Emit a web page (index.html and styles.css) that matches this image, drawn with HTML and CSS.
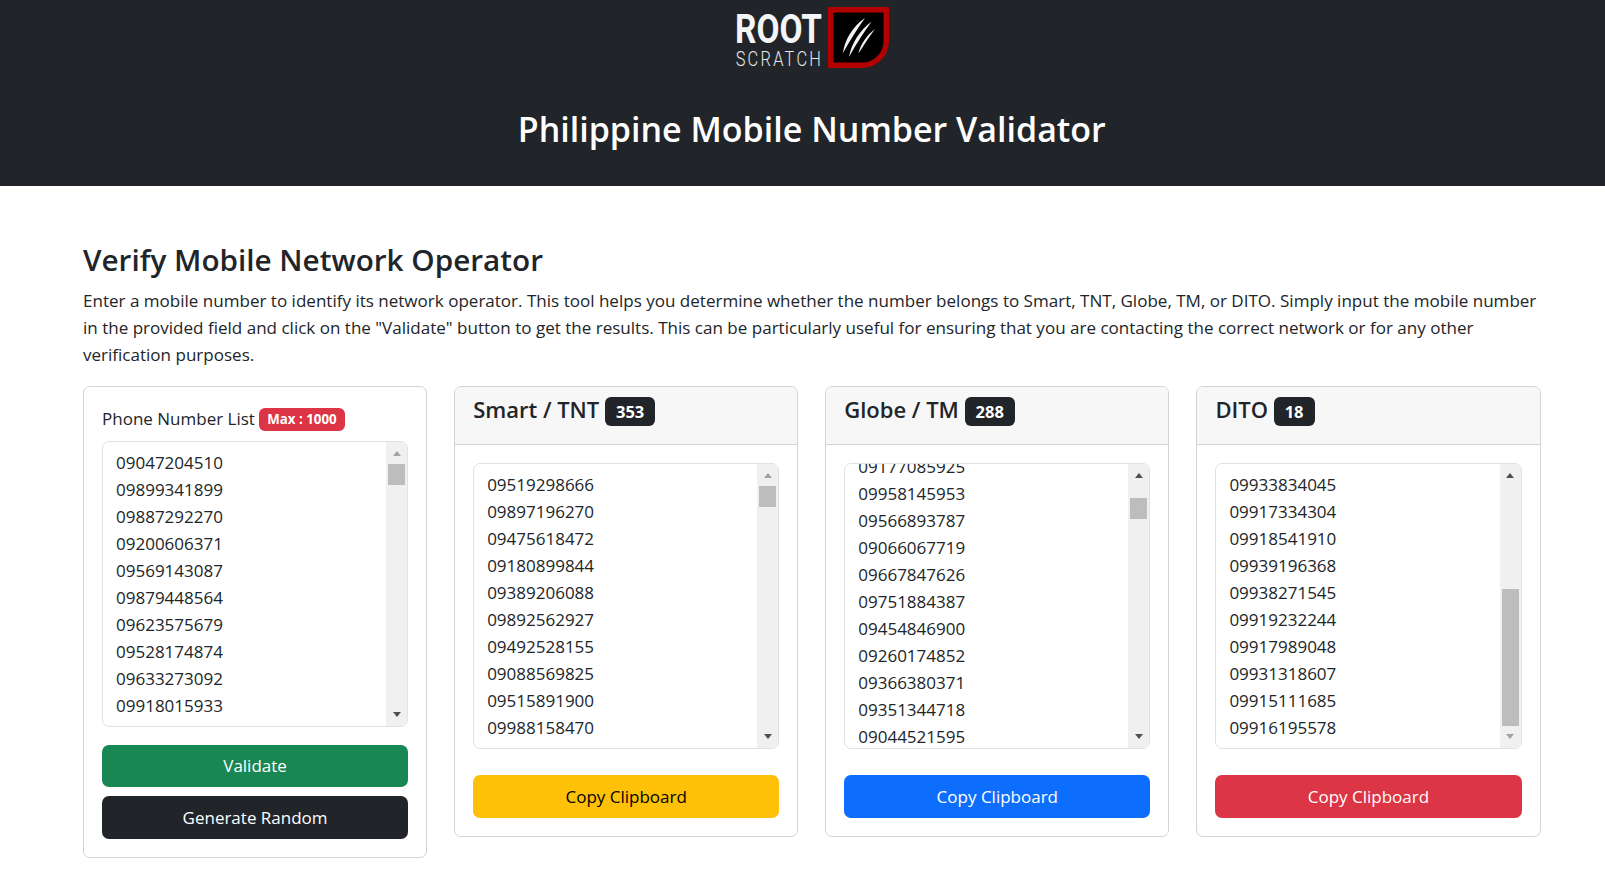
FILE: index.html
```html
<!DOCTYPE html>
<html lang="en">
<head>
<meta charset="utf-8">
<title>Philippine Mobile Number Validator</title>
<link rel="stylesheet" href="styles.css">
</head>
<body>
<header class="site-header">
  <svg class="logo" viewBox="0 0 155 70" width="155" height="70" role="img" aria-label="Root Scratch">
    <text class="logo-root" x="1" y="43" textLength="87" lengthAdjust="spacingAndGlyphs">ROOT</text>
    <g transform="scale(.82 1)">
      <text class="logo-scratch" x="2" y="66" textLength="104" lengthAdjust="spacing">SCRATCH</text>
    </g>
    <g transform="translate(94 7)">
      <path d="M2.7 2.7H58.3V34A24.3 24.3 0 0 1 34 58.3H2.7Z" fill="#000" stroke="#b30000" stroke-width="5.4"/>
      <path d="M15 46C16.5 33 25 19 37 11C30 21 22 33 15 46Z" fill="#f2f2f2"/>
      <path d="M21 50C23.5 36 32 23 43.5 14.7C36 25 28 37 21 50Z" fill="#f2f2f2"/>
      <path d="M30.5 46.5C32.5 37 39 28 47 22C41 30 36 38 30.5 46.5Z" fill="#f2f2f2"/>
    </g>
  </svg>
  <h1 class="site-title">Philippine Mobile Number Validator</h1>
</header>

<main class="content">
  <h2 class="section-title">Verify Mobile Network Operator</h2>
  <p class="intro">Enter a mobile number to identify its network operator. This tool helps you determine whether the number belongs to Smart, TNT, Globe, TM, or DITO. Simply input the mobile number in the provided field and click on the "Validate" button to get the results. This can be particularly useful for ensuring that you are contacting the correct network or for any other verification purposes.</p>

  <div class="cards">
    <section class="card">
      <div class="card-body">
        <div class="field-label">Phone Number List <span class="badge badge-red">Max : 1000</span></div>
        <div class="listbox">
          <div class="list-lines">
            <div>09047204510</div><div>09899341899</div><div>09887292270</div><div>09200606371</div><div>09569143087</div><div>09879448564</div><div>09623575679</div><div>09528174874</div><div>09633273092</div><div>09918015933</div>
          </div>
          <div class="scrollbar">
            <span class="arrow-up arrow-off"></span>
            <span class="thumb thumb-top"></span>
            <span class="arrow-down"></span>
          </div>
        </div>
        <button class="btn btn-green btn-first">Validate</button>
        <button class="btn btn-dark btn-next">Generate Random</button>
      </div>
    </section>

    <section class="card">
      <div class="card-header">Smart / TNT <span class="badge badge-dark">353</span></div>
      <div class="card-body">
        <div class="listbox">
          <div class="list-lines">
            <div>09519298666</div><div>09897196270</div><div>09475618472</div><div>09180899844</div><div>09389206088</div><div>09892562927</div><div>09492528155</div><div>09088569825</div><div>09515891900</div><div>09988158470</div>
          </div>
          <div class="scrollbar">
            <span class="arrow-up arrow-off"></span>
            <span class="thumb thumb-top"></span>
            <span class="arrow-down"></span>
          </div>
        </div>
        <button class="btn btn-yellow btn-copy">Copy Clipboard</button>
      </div>
    </section>

    <section class="card">
      <div class="card-header">Globe / TM <span class="badge badge-dark">288</span></div>
      <div class="card-body">
        <div class="listbox">
          <div class="list-lines list-scrolled">
            <div>09177085925</div><div>09958145953</div><div>09566893787</div><div>09066067719</div><div>09667847626</div><div>09751884387</div><div>09454846900</div><div>09260174852</div><div>09366380371</div><div>09351344718</div><div>09044521595</div>
          </div>
          <div class="scrollbar">
            <span class="arrow-up"></span>
            <span class="thumb thumb-globe"></span>
            <span class="arrow-down"></span>
          </div>
        </div>
        <button class="btn btn-blue btn-copy">Copy Clipboard</button>
      </div>
    </section>

    <section class="card">
      <div class="card-header">DITO <span class="badge badge-dark">18</span></div>
      <div class="card-body">
        <div class="listbox">
          <div class="list-lines">
            <div>09933834045</div><div>09917334304</div><div>09918541910</div><div>09939196368</div><div>09938271545</div><div>09919232244</div><div>09917989048</div><div>09931318607</div><div>09915111685</div><div>09916195578</div>
          </div>
          <div class="scrollbar">
            <span class="arrow-up"></span>
            <span class="thumb thumb-dito"></span>
            <span class="arrow-down arrow-off"></span>
          </div>
        </div>
        <button class="btn btn-red btn-copy">Copy Clipboard</button>
      </div>
    </section>
  </div>
</main>
</body>
</html>
```
FILE: styles.css
```css
* { box-sizing: border-box; }
html, body { margin: 0; height: 100%; overflow: hidden; }
body {
  font-family: "Open Sans", "Noto Sans", sans-serif;
  font-size: 17px;
  line-height: 27px;
  color: #212529;
  background: #fff;
}
.site-header {
  height: 186px;
  background: #212529;
  color: #fff;
  padding: 0 64.5px 0 83px;
  display: flex;
  flex-direction: column;
  align-items: center;
}
.logo { display: block; flex: none; }
.logo-root { font-family: Roboto, sans-serif; font-weight: 700; font-size: 41px; fill: #f4f5f7; }
.logo-scratch { font-family: Roboto, sans-serif; font-weight: 300; font-size: 20px; fill: #e8e9eb; }
.site-title {
  margin: 39px 0 0;
  font-size: 34px;
  line-height: 41px;
  font-weight: 600;
}
.content { padding: 55px 64.5px 0 83px; }
.section-title {
  margin: 0 0 8px;
  font-size: 29.7px;
  line-height: 38px;
  font-weight: 600;
}
.intro { margin: 0 0 18px; font-size: 17.05px; }
.cards {
  display: grid;
  grid-template-columns: repeat(4, 1fr);
  gap: 27px;
  align-items: start;
}
.card {
  border: 1px solid #d3d3d3;
  border-radius: 7px;
  background: #fff;
  overflow: hidden;
}
.card-header {
  height: 58px;
  padding: 7px 18px 0;
  background: #f7f7f7;
  border-bottom: 1px solid #d3d3d3;
  font-size: 22px;
  line-height: 30px;
  font-weight: 600;
}
.card-body { padding: 18px; display: flex; flex-direction: column; }
.field-label { margin-bottom: 9px; height: 27px; }
.badge {
  display: inline-block;
  font-weight: 700;
  color: #fff;
  border-radius: 6px;
  vertical-align: middle;
  text-align: center;
}
.badge-red { background: #dc3545; font-size: 13.3px; line-height: 23px; padding: 0 8px; margin-bottom: 2px; }
.badge-dark { background: #212529; font-size: 16.5px; line-height: 29px; padding: 0 11px; margin-bottom: 2px; }
.listbox {
  height: 285.5px;
  border: 1px solid #dee2e6;
  border-radius: 7px;
  display: flex;
  overflow: hidden;
}
.list-lines {
  flex: 1;
  padding: 7px 13px;
  overflow: hidden;
}
.list-scrolled { padding-top: 0; }
.list-scrolled > div:first-child { margin-top: -11px; }
.scrollbar {
  flex: none;
  width: 21px;
  background: #f0f0f0;
  display: flex;
  flex-direction: column;
  align-items: center;
  position: relative;
}
.arrow-up, .arrow-down {
  flex: none;
  width: 0;
  height: 0;
  border-left: 4.5px solid transparent;
  border-right: 4.5px solid transparent;
}
.arrow-up { border-bottom: 5px solid #505050; margin-top: 9px; }
.arrow-down { border-top: 5px solid #505050; position: absolute; bottom: 9px; }
.arrow-up.arrow-off { border-bottom-color: #a3a3a3; }
.arrow-down.arrow-off { border-top-color: #a3a3a3; }
.thumb { flex: none; width: 17px; background: #bdbdbd; }
.thumb-top { height: 21px; margin-top: 8px; }
.thumb-globe { height: 21px; margin-top: 20px; }
.thumb-dito { height: 137px; margin-top: 111px; }
.btn {
  display: block;
  width: 100%;
  height: 42.5px;
  border: 1px solid transparent;
  border-radius: 7px;
  font: inherit;
  color: #fff;
  text-align: center;
  padding: 0;
}
.btn-first { margin-top: 18px; }
.btn-next { margin-top: 9px; }
.btn-copy { margin-top: 26.5px; }
.btn-green { background: #198754; }
.btn-dark { background: #212529; }
.btn-yellow { background: #ffc107; color: #000; }
.btn-blue { background: #0d6efd; }
.btn-red { background: #dc3545; }
```
